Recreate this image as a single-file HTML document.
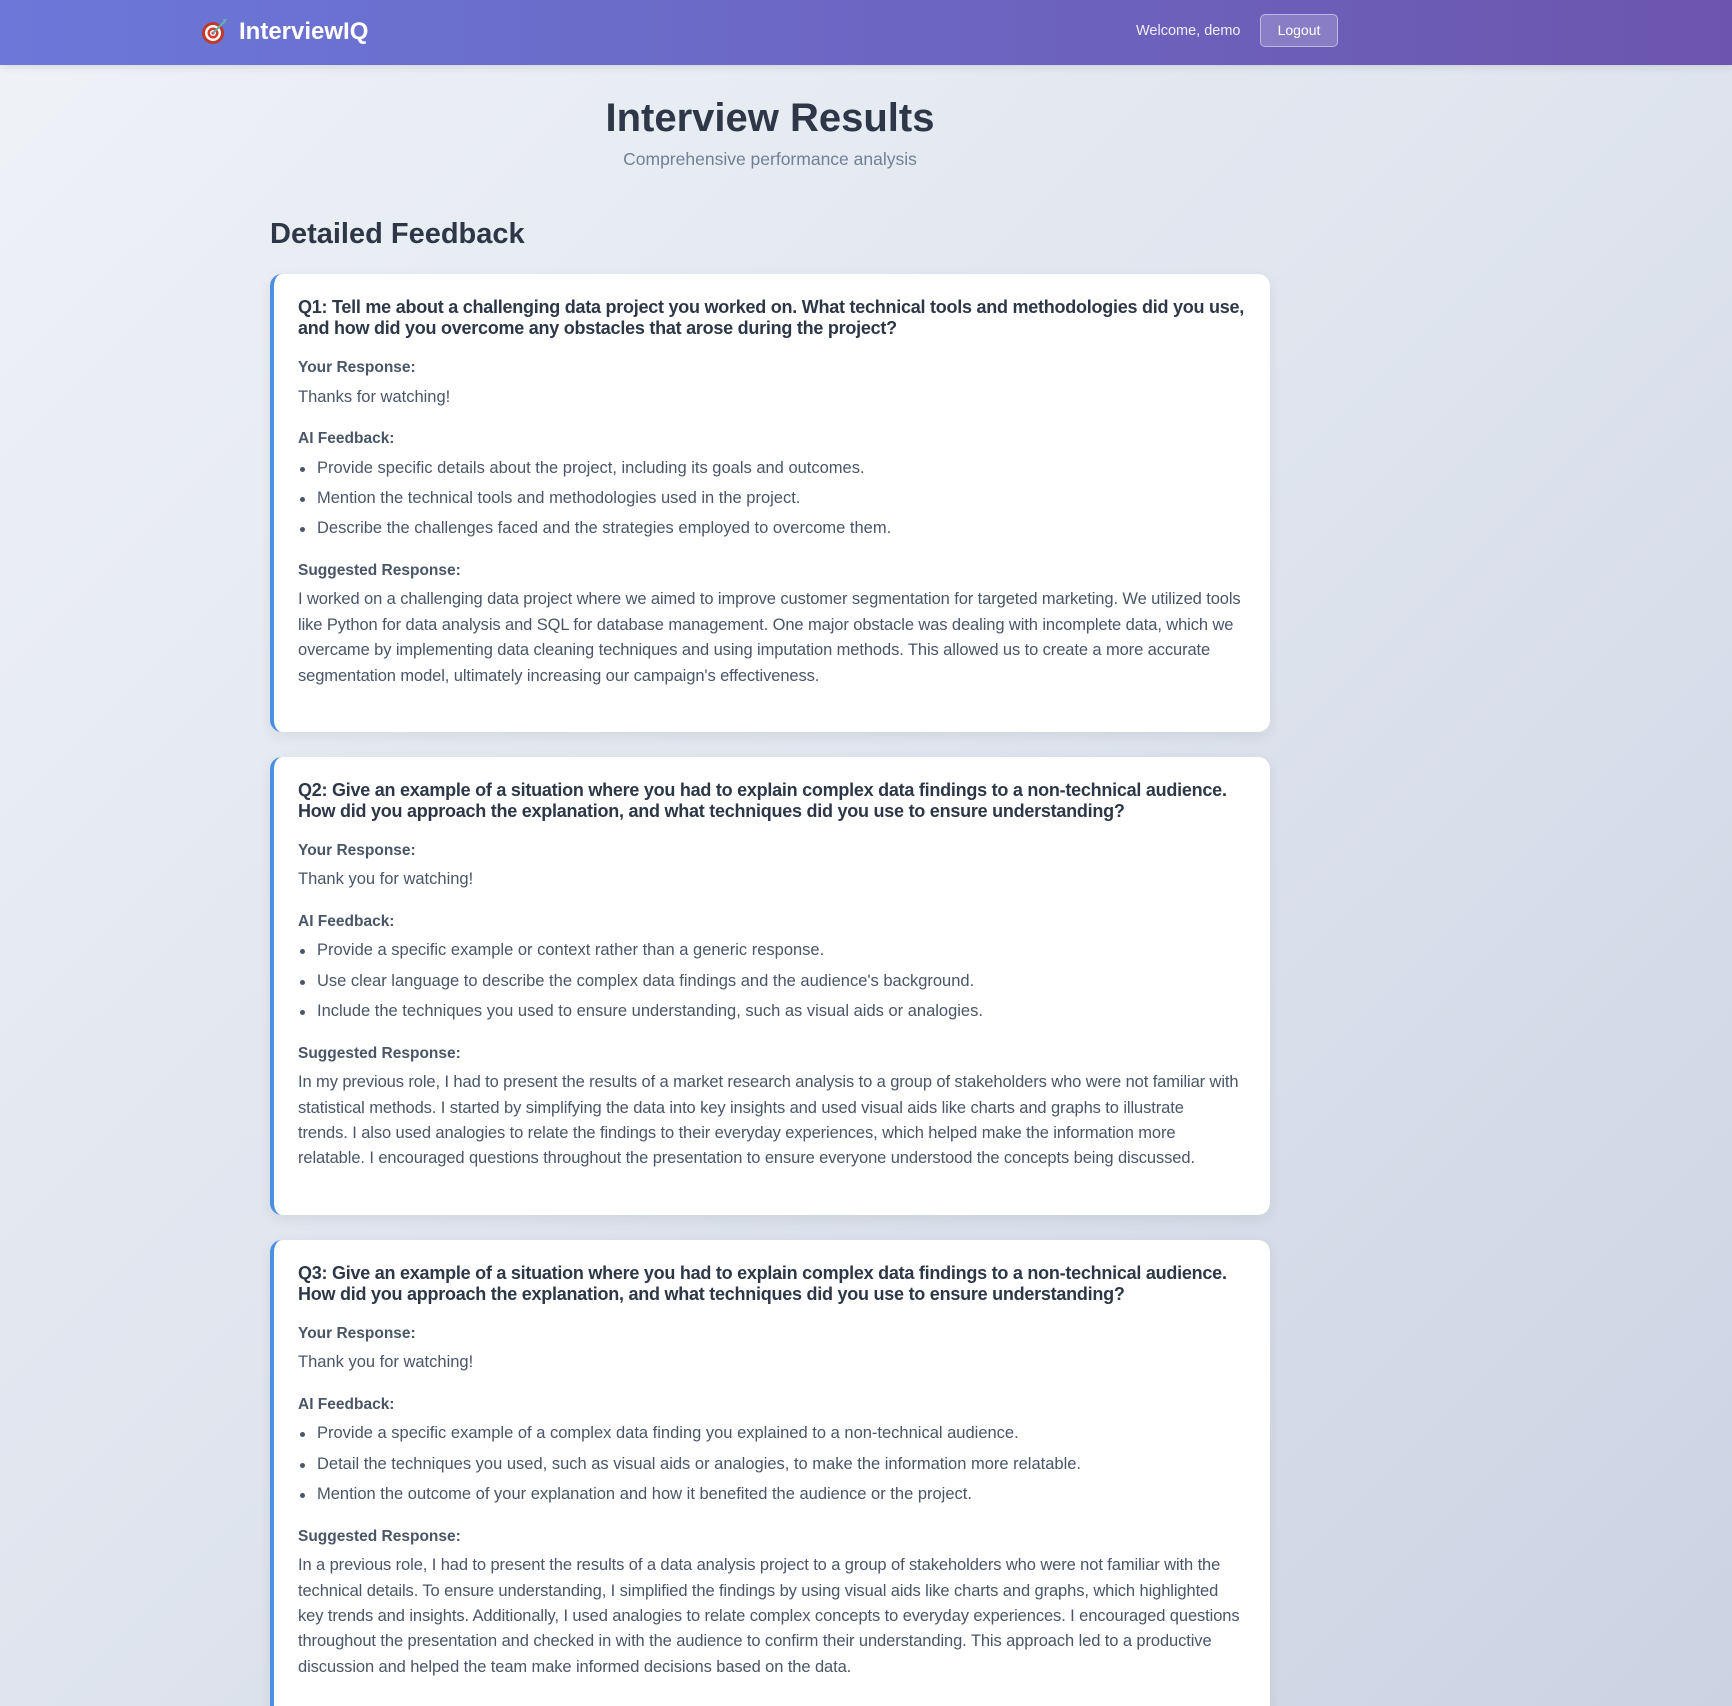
<!DOCTYPE html>
<html><head><meta charset="utf-8"><style>
*{margin:0;padding:0;box-sizing:border-box}
html{width:1732px;height:1706px;overflow:hidden;background:linear-gradient(135deg,#eff2f7 0%,#dfe4ee 50%,#cbd3e3 100%)}
body{width:1732px;height:1706px;overflow:hidden;font-family:"Liberation Sans",sans-serif;background:linear-gradient(135deg,#eff2f7 0%,#dfe4ee 50%,#cbd3e3 100%);color:#2d3748;position:relative}
.hdr{height:65px;background:linear-gradient(90deg,#6b78d9,#6c55ad);position:relative;box-shadow:0 2px 8px rgba(0,0,0,.1)}
.logo{position:absolute;left:201px;top:17px;width:28px;height:28px}
.brand{position:absolute;left:239px;top:18px;font-size:24px;font-weight:bold;color:#fff}
.wel{position:absolute;left:1136px;top:23px;font-size:14.5px;color:#f0eefc}
.btn{position:absolute;left:1260px;top:14px;width:78px;height:33px;border:1px solid rgba(255,255,255,.45);background:rgba(255,255,255,.2);border-radius:5px;color:#fff;font-size:14px;text-align:center;line-height:31px}
h1{position:absolute;top:96px;left:0;width:1540px;text-align:center;font-size:40px;color:#2d3748;font-weight:bold}
.sub{position:absolute;top:149px;left:0;width:1540px;text-align:center;font-size:17.5px;color:#718096}
h2{position:absolute;left:270px;top:218px;font-size:29px;color:#2d3748;font-weight:bold}
.cards{position:absolute;left:262px;top:266px;width:1016px;height:1440px;overflow:hidden;padding:8px 8px 0 8px}
.card{background:#fff;border-left:4px solid #4a90e2;border-radius:12px;box-shadow:0 4px 14px rgba(0,0,0,.07);padding:23px 24px 43px 24px;margin-bottom:25px}
.q{font-size:18px;line-height:21px;font-weight:bold;color:#2d3748;margin-bottom:19px;letter-spacing:-0.25px}
.l{font-size:15.5px;line-height:20px;font-weight:bold;color:#4a5568;margin-bottom:6.5px}
.t{font-size:16.5px;line-height:25px;color:#4a5568;margin-bottom:19.5px}
ul{list-style:none;margin-bottom:19.5px}
li{font-size:16.5px;line-height:25px;color:#4a5568;padding-left:19px;position:relative;margin-bottom:5.4px}
li:last-child{margin-bottom:0}
li:before{content:"";position:absolute;left:2px;top:11px;width:5px;height:5px;border-radius:50%;background:#4a5568}
.p{font-size:16.5px;line-height:25.4px;color:#4a5568;letter-spacing:-0.1px}
</style></head><body>
<div class="hdr">
<svg class="logo" viewBox="0 0 28 28"><circle cx="12" cy="16" r="11" fill="#c0392b"/><circle cx="12" cy="16" r="8" fill="#fff"/><circle cx="12" cy="16" r="5.5" fill="#d63a2e"/><circle cx="12" cy="16" r="3" fill="#fff"/><circle cx="12" cy="16" r="1.5" fill="#c0392b"/><line x1="12" y1="16" x2="24" y2="4" stroke="#5fb3b3" stroke-width="2"/><path d="M22 2 L26 2 L24 6 Z M22 6 L26 6" fill="#5fb3b3"/></svg>
<div class="brand">InterviewIQ</div>
<div class="wel">Welcome, demo</div>
<div class="btn">Logout</div>
</div>
<h1>Interview Results</h1>
<div class="sub">Comprehensive performance analysis</div>
<h2>Detailed Feedback</h2>
<div class="cards">
<div class="card">
<div class="q">Q1: Tell me about a challenging data project you worked on. What technical tools and methodologies did you use, and how did you overcome any obstacles that arose during the project?</div>
<div class="l">Your Response:</div><div class="t">Thanks for watching!</div>
<div class="l">AI Feedback:</div>
<ul><li>Provide specific details about the project, including its goals and outcomes.</li><li>Mention the technical tools and methodologies used in the project.</li><li>Describe the challenges faced and the strategies employed to overcome them.</li></ul>
<div class="l">Suggested Response:</div>
<div class="p">I worked on a challenging data project where we aimed to improve customer segmentation for targeted marketing. We utilized tools like Python for data analysis and SQL for database management. One major obstacle was dealing with incomplete data, which we overcame by implementing data cleaning techniques and using imputation methods. This allowed us to create a more accurate segmentation model, ultimately increasing our campaign's effectiveness.</div>
</div>
<div class="card">
<div class="q">Q2: Give an example of a situation where you had to explain complex data findings to a non-technical audience. How did you approach the explanation, and what techniques did you use to ensure understanding?</div>
<div class="l">Your Response:</div><div class="t">Thank you for watching!</div>
<div class="l">AI Feedback:</div>
<ul><li>Provide a specific example or context rather than a generic response.</li><li>Use clear language to describe the complex data findings and the audience's background.</li><li>Include the techniques you used to ensure understanding, such as visual aids or analogies.</li></ul>
<div class="l">Suggested Response:</div>
<div class="p">In my previous role, I had to present the results of a market research analysis to a group of stakeholders who were not familiar with statistical methods. I started by simplifying the data into key insights and used visual aids like charts and graphs to illustrate<br>trends. I also used analogies to relate the findings to their everyday experiences, which helped make the information more relatable. I encouraged questions throughout the presentation to ensure everyone understood the concepts being discussed.</div>
</div>
<div class="card">
<div class="q">Q3: Give an example of a situation where you had to explain complex data findings to a non-technical audience. How did you approach the explanation, and what techniques did you use to ensure understanding?</div>
<div class="l">Your Response:</div><div class="t">Thank you for watching!</div>
<div class="l">AI Feedback:</div>
<ul><li>Provide a specific example of a complex data finding you explained to a non-technical audience.</li><li>Detail the techniques you used, such as visual aids or analogies, to make the information more relatable.</li><li>Mention the outcome of your explanation and how it benefited the audience or the project.</li></ul>
<div class="l">Suggested Response:</div>
<div class="p">In a previous role, I had to present the results of a data analysis project to a group of stakeholders who were not familiar with the technical details. To ensure understanding, I simplified the findings by using visual aids like charts and graphs, which highlighted<br>key trends and insights. Additionally, I used analogies to relate complex concepts to everyday experiences. I encouraged questions throughout the presentation and checked in with the audience to confirm their understanding. This approach led to a productive discussion and helped the team make informed decisions based on the data.</div>
</div>
</div>
</body></html>
